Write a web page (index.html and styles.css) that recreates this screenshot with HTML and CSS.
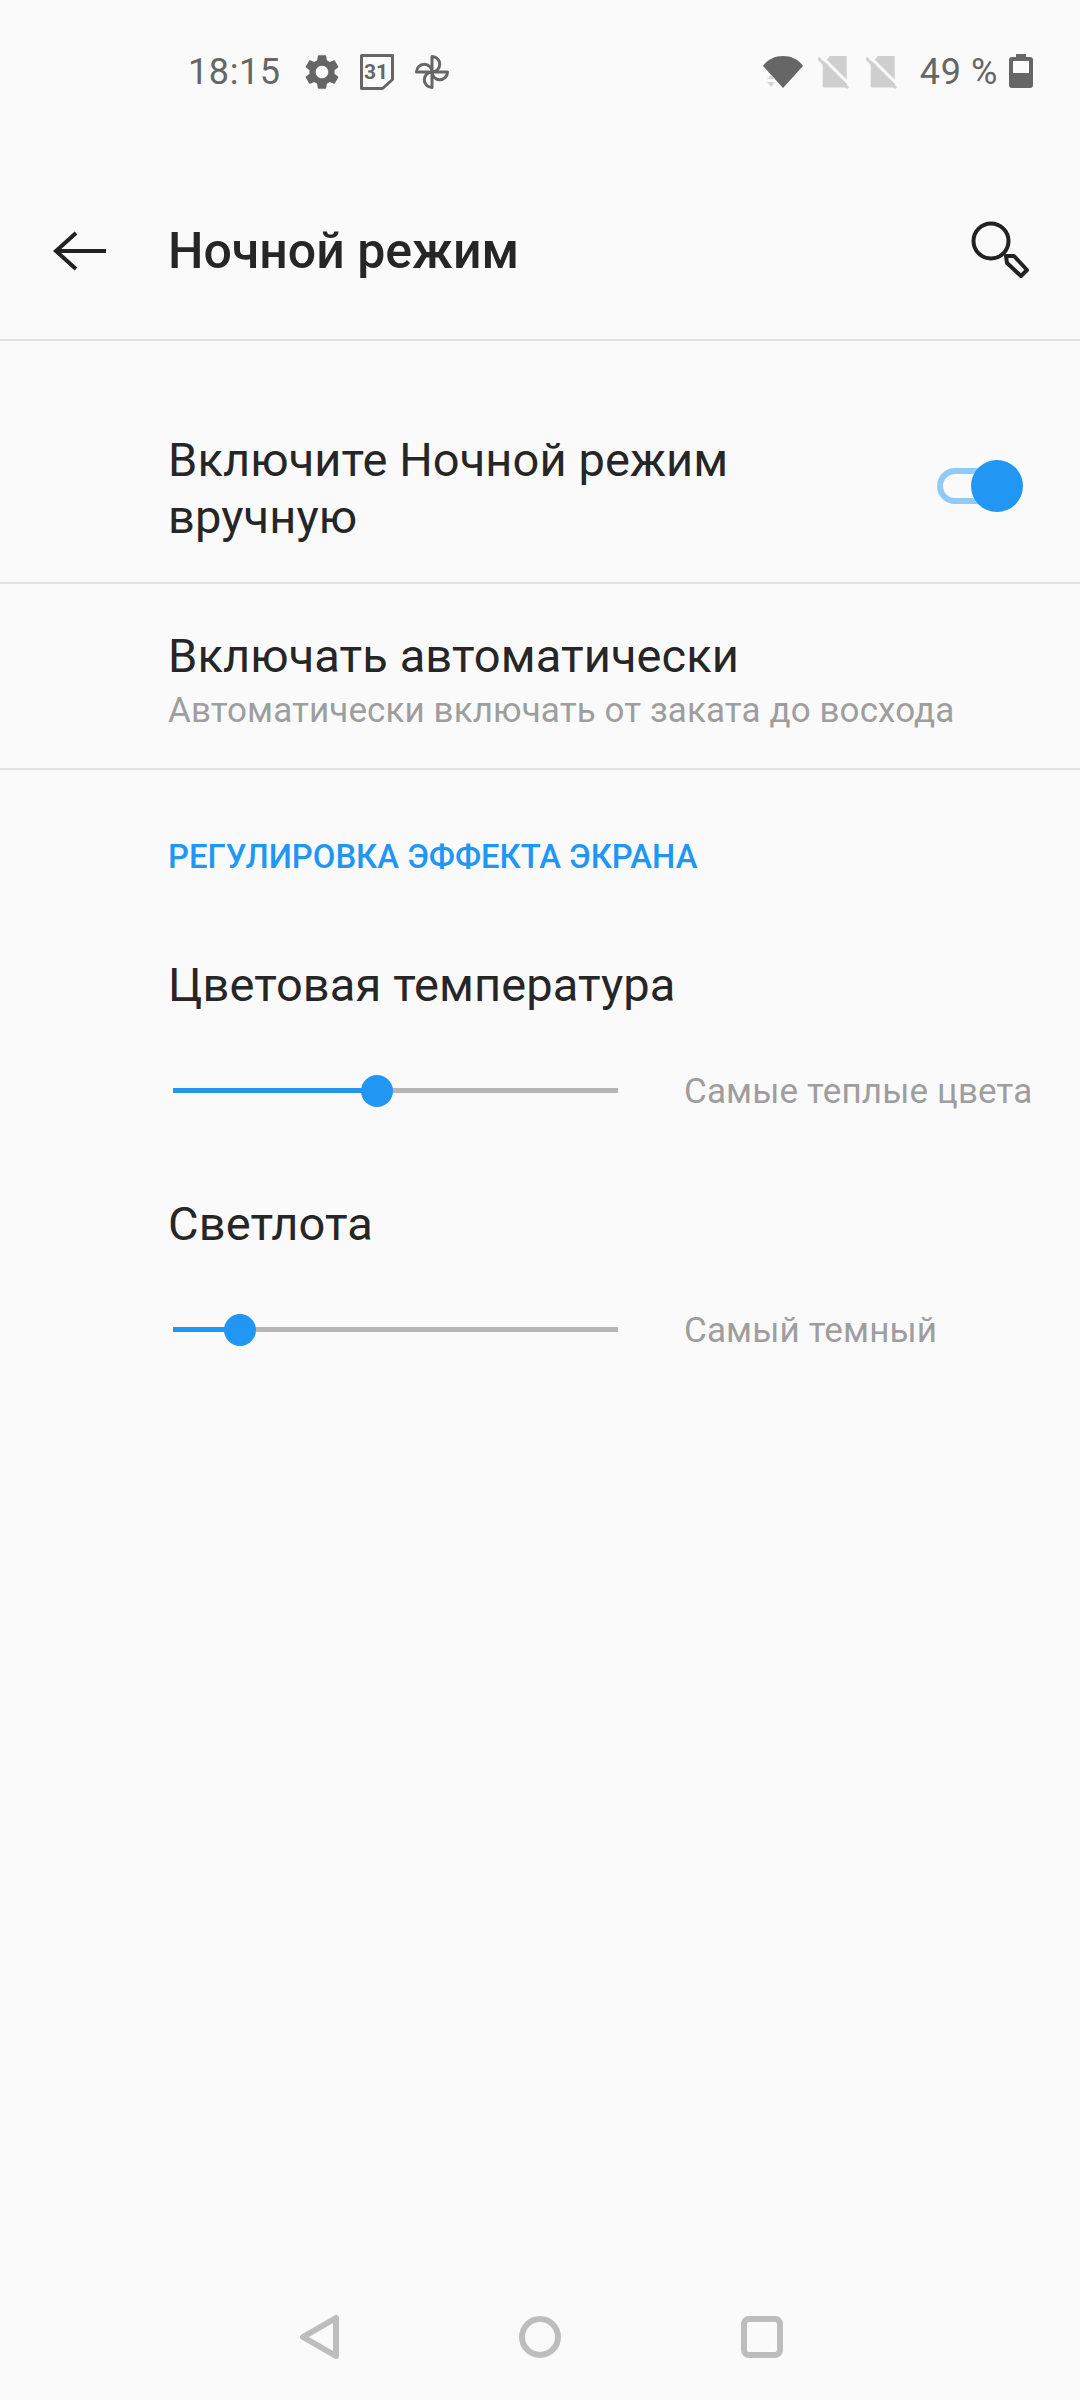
FILE: index.html
```html
<!DOCTYPE html>
<html lang="ru">
<head>
    <meta charset="UTF-8">
    <meta name="viewport" content="width=device-width, initial-scale=1.0">
    <title>Ночной режим</title>
    <link rel="stylesheet" href="styles.css">
</head>
<body>
<div class="screen">

    <div class="status-bar">
        <span class="status-text time">18:15</span>
        <svg class="st-icon gear" width="42" height="42" viewBox="0 0 24 24">
            <path fill="#666" d="M19.14 12.94c.04-.3.06-.61.06-.94 0-.32-.02-.64-.07-.94l2.03-1.58c.18-.14.23-.41.12-.61l-1.92-3.32c-.12-.22-.37-.29-.59-.22l-2.39.96c-.5-.38-1.03-.7-1.62-.94l-.36-2.54c-.04-.24-.24-.41-.48-.41h-3.84c-.24 0-.43.17-.47.41l-.36 2.54c-.59.24-1.13.57-1.62.94l-2.39-.96c-.22-.08-.47 0-.59.22L2.74 8.87c-.12.21-.08.47.12.61l2.03 1.58c-.05.3-.09.63-.09.94s.02.64.07.94l-2.03 1.58c-.18.14-.23.41-.12.61l1.92 3.32c.12.22.37.29.59.22l2.39-.96c.5.38 1.03.7 1.62.94l.36 2.54c.05.24.24.41.48.41h3.84c.24 0 .44-.17.47-.41l.36-2.54c.59-.24 1.13-.56 1.62-.94l2.39.96c.22.08.47 0 .59-.22l1.92-3.32c.12-.22.07-.47-.12-.61l-2.01-1.58zM12 15.6c-1.98 0-3.6-1.62-3.6-3.6s1.62-3.6 3.6-3.6 3.6 1.62 3.6 3.6-1.62 3.6-3.6 3.6z"/>
        </svg>
        <svg class="st-icon cal" width="36" height="38" viewBox="0 0 36 38">
            <path fill="none" stroke="#666" stroke-width="3" stroke-linejoin="round" d="M3.500 2.500h31v24l-10 9h-21z"/>
            <text x="18" y="26" text-anchor="middle" class="cal-num">31</text>
        </svg>
        <svg class="st-icon wheel" width="36" height="36" viewBox="0 0 36 36">
            <g fill="none" stroke="#666" stroke-width="3" stroke-linejoin="round">
                <path d="M18 18V2.500a7.750 7.750 0 0 1 0 15.500z"/>
                <path d="M18 18h15.500a7.750 7.750 0 0 1-15.500 0z"/>
                <path d="M18 18v15.500a7.750 7.750 0 0 1 0-15.500z"/>
                <path d="M18 18H2.500a7.750 7.750 0 0 1 15.500 0z"/>
            </g>
        </svg>
        <div class="status-right">
            <svg class="st-icon wifi" width="40" height="34" viewBox="0 0 40 34">
                <path fill="#666" d="M0 11C5 4 12 1 20 1s15 3 20 10L20 33z"/>
                <path fill="#d6d6d6" d="M4 24l4-4 4 4zM4 27h8l-4 5z"/>
            </svg>
            <svg class="st-icon sim" width="34" height="36" viewBox="0 0 34 36">
                <path fill="#cfcfcf" d="M12 2h16.700v31.500H4.700V10z"/>
                <path stroke="#fafafa" stroke-width="3" d="M2.500 1.500l30 30"/>
                <path stroke="#cfcfcf" stroke-width="3" d="M0 4l30 30"/>
            </svg>
            <svg class="st-icon sim sim-two" width="34" height="36" viewBox="0 0 34 36">
                <path fill="#cfcfcf" d="M12 2h16.700v31.500H4.700V10z"/>
                <path stroke="#fafafa" stroke-width="3" d="M2.500 1.500l30 30"/>
                <path stroke="#cfcfcf" stroke-width="3" d="M0 4l30 30"/>
            </svg>
            <span class="status-text battery-text">49 %</span>
            <svg class="st-icon batt" width="24" height="36" viewBox="0 0 24 36">
                <path fill="#666" fill-rule="evenodd" d="M7 3V0h10v3h4a3 3 0 0 1 3 3v25a3 3 0 0 1-3 3H3a3 3 0 0 1-3-3V6a3 3 0 0 1 3-3zM4 7v12h16V7z"/>
            </svg>
        </div>
    </div>

    <header class="app-bar">
        <svg class="back" width="60" height="44" viewBox="0 0 60 44">
            <path fill="none" stroke="#222" stroke-width="4" d="M25 4L5 22l20 18M5 22h50"/>
        </svg>
        <h1 class="title">Ночной режим</h1>
        <svg class="search" width="60" height="64" viewBox="0 0 60 64">
            <g fill="none" stroke="#222" stroke-width="4" stroke-linejoin="round">
                <circle cx="22" cy="22" r="17.500"/>
                <path d="M37 37h8l13 14-6 6-14-13z"/>
            </g>
        </svg>
    </header>

    <div class="row row-toggle">
        <div class="row-title">Включите Ночной режим<br>вручную</div>
        <div class="toggle"><span class="toggle-knob"></span></div>
    </div>

    <div class="row row-auto">
        <div class="row-title">Включать автоматически</div>
        <div class="row-sub">Автоматически включать от заката до восхода</div>
    </div>

    <section class="adjust">
        <div class="section-head">РЕГУЛИРОВКА ЭФФЕКТА ЭКРАНА</div>

        <div class="setting setting-temp">
            <div class="row-title">Цветовая температура</div>
            <div class="slider-line">
                <div class="slider">
                    <div class="slider-fill" style="width: 204px"></div>
                    <span class="slider-thumb" style="left: 204px"></span>
                </div>
                <span class="slider-label">Самые теплые цвета</span>
            </div>
        </div>

        <div class="setting setting-light">
            <div class="row-title">Светлота</div>
            <div class="slider-line">
                <div class="slider">
                    <div class="slider-fill" style="width: 67px"></div>
                    <span class="slider-thumb" style="left: 67px"></span>
                </div>
                <span class="slider-label">Самый темный</span>
            </div>
        </div>
    </section>

    <nav class="nav-bar">
        <svg width="39" height="46" viewBox="0 0 39 46">
            <path fill="none" stroke="#bdbdbd" stroke-width="6" stroke-linejoin="round" d="M36 4v38L3 23z"/>
        </svg>
        <svg width="42" height="42" viewBox="0 0 42 42">
            <circle cx="21" cy="21" r="18" fill="none" stroke="#bdbdbd" stroke-width="6"/>
        </svg>
        <svg width="42" height="42" viewBox="0 0 42 42">
            <rect x="3" y="3" width="36" height="36" rx="5" fill="none" stroke="#bdbdbd" stroke-width="6"/>
        </svg>
    </nav>

</div>
</body>
</html>
```

FILE: styles.css
```css
* {
    box-sizing: border-box;
}

body {
    margin: 0;
    background: #fafafa;
    font-family: Roboto, "Noto Sans", sans-serif;
    color: #262626;
}

.screen {
    width: 1080px;
    height: 2400px;
    overflow: hidden;
    display: flex;
    flex-direction: column;
}

.status-bar {
    height: 144px;
    padding: 0 47px 0 188px;
    display: flex;
    align-items: center;
}

.status-text {
    font-size: 36px;
    letter-spacing: .6px;
    color: #666;
    line-height: 44px;
}

.st-icon {
    flex: none;
}

.gear {
    margin-left: 20px;
}

.cal {
    margin-left: 15px;
}

.wheel {
    margin-left: 20px;
}

.cal-num {
    font-family: Roboto, sans-serif;
    font-size: 21px;
    font-weight: 700;
    fill: #666;
}

.status-right {
    margin-left: auto;
    display: flex;
    align-items: center;
}

.sim {
    margin-left: 15px;
}

.sim-two {
    margin-left: 14px;
}

.battery-text {
    margin-left: 20px;
}

.batt {
    margin-left: 11px;
}

.app-bar {
    height: 197px;
    padding: 18px 51px 0 51px;
    display: flex;
    align-items: center;
    border-bottom: 2px solid #e3e3e3;
}

.title {
    margin: 0 0 0 57px;
    font-size: 50px;
    font-weight: 500;
    flex: 1;
    color: #262626;
}

.row {
    padding-left: 168px;
    border-bottom: 2px solid #e3e3e3;
}

.row-title {
    font-size: 47px;
    letter-spacing: .1px;
    line-height: 57px;
    color: #262626;
}

.row-toggle {
    height: 243px;
    padding-right: 69px;
    padding-top: 52px;
    display: flex;
    align-items: center;
    justify-content: space-between;
}

.toggle {
    position: relative;
    width: 74px;
    height: 36px;
    margin-bottom: 4px;
    border: 6px solid #90caf9;
    border-radius: 18px;
}

.toggle-knob {
    position: absolute;
    right: -18px;
    top: -14px;
    width: 52px;
    height: 52px;
    border-radius: 50%;
    background: #2196f3;
}

.row-auto {
    height: 186px;
    padding-top: 43px;
}

.row-sub {
    font-size: 35px;
    letter-spacing: .1px;
    line-height: 44px;
    color: #9e9e9e;
    margin-top: 5px;
}

.adjust {
    padding: 0 47px 0 168px;
}

.section-head {
    margin-top: 67px;
    font-size: 32.800px;
    line-height: 40px;
    font-weight: 500;
    color: #2196f3;
}

.setting-temp {
    margin-top: 79px;
}

.setting-light {
    margin-top: 75px;
}

.slider-line {
    margin-top: 47px;
    height: 60px;
    display: flex;
    align-items: center;
}

.slider {
    position: relative;
    margin-left: 5px;
    width: 445px;
    height: 5px;
    background: #b6b6b6;
}

.slider-fill {
    height: 5px;
    background: #2196f3;
}

.slider-thumb {
    position: absolute;
    top: -13px;
    margin-left: -16px;
    width: 32px;
    height: 32px;
    border-radius: 50%;
    background: #2196f3;
}

.slider-label {
    margin-left: 66px;
    margin-top: 2px;
    font-size: 35px;
    letter-spacing: .15px;
    color: #9e9e9e;
    white-space: nowrap;
}

.nav-bar {
    margin-top: auto;
    height: 126px;
    padding: 0 297px 0 300px;
    display: flex;
    align-items: center;
    justify-content: space-between;
}
```
